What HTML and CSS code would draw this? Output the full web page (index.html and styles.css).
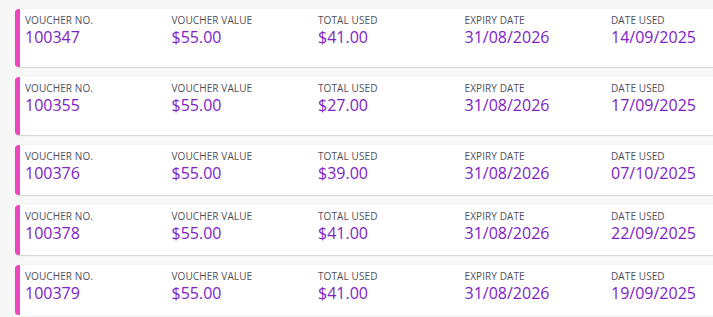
FILE: index.html
```html
<!DOCTYPE html>
<html>
<head>
<meta charset="utf-8">
<link rel="stylesheet" href="styles.css">
</head>
<body>
<div class="list">
  <div class="card tall">
    <div class="field"><div class="label">VOUCHER NO.</div><div class="value">100347</div></div>
    <div class="field"><div class="label">VOUCHER VALUE</div><div class="value">$55.00</div></div>
    <div class="field"><div class="label">TOTAL USED</div><div class="value">$41.00</div></div>
    <div class="field"><div class="label">EXPIRY DATE</div><div class="value">31/08/2026</div></div>
    <div class="field"><div class="label">DATE USED</div><div class="value">14/09/2025</div></div>
  </div>
  <div class="card tall">
    <div class="field"><div class="label">VOUCHER NO.</div><div class="value">100355</div></div>
    <div class="field"><div class="label">VOUCHER VALUE</div><div class="value">$55.00</div></div>
    <div class="field"><div class="label">TOTAL USED</div><div class="value">$27.00</div></div>
    <div class="field"><div class="label">EXPIRY DATE</div><div class="value">31/08/2026</div></div>
    <div class="field"><div class="label">DATE USED</div><div class="value">17/09/2025</div></div>
  </div>
  <div class="card">
    <div class="field"><div class="label">VOUCHER NO.</div><div class="value">100376</div></div>
    <div class="field"><div class="label">VOUCHER VALUE</div><div class="value">$55.00</div></div>
    <div class="field"><div class="label">TOTAL USED</div><div class="value">$39.00</div></div>
    <div class="field"><div class="label">EXPIRY DATE</div><div class="value">31/08/2026</div></div>
    <div class="field"><div class="label">DATE USED</div><div class="value">07/10/2025</div></div>
  </div>
  <div class="card">
    <div class="field"><div class="label">VOUCHER NO.</div><div class="value">100378</div></div>
    <div class="field"><div class="label">VOUCHER VALUE</div><div class="value">$55.00</div></div>
    <div class="field"><div class="label">TOTAL USED</div><div class="value">$41.00</div></div>
    <div class="field"><div class="label">EXPIRY DATE</div><div class="value">31/08/2026</div></div>
    <div class="field"><div class="label">DATE USED</div><div class="value">22/09/2025</div></div>
  </div>
  <div class="card">
    <div class="field"><div class="label">VOUCHER NO.</div><div class="value">100379</div></div>
    <div class="field"><div class="label">VOUCHER VALUE</div><div class="value">$55.00</div></div>
    <div class="field"><div class="label">TOTAL USED</div><div class="value">$41.00</div></div>
    <div class="field"><div class="label">EXPIRY DATE</div><div class="value">31/08/2026</div></div>
    <div class="field"><div class="label">DATE USED</div><div class="value">19/09/2025</div></div>
  </div>
</div>
</body>
</html>
```
FILE: styles.css
```css
html, body {
  margin: 0;
  padding: 0;
  background: #f7f7f7;
  overflow: hidden;
  font-family: "Open Sans", "Noto Sans", sans-serif;
}
.list {
  display: flex;
  flex-direction: column;
  gap: 10px;
  padding: 9px 0 0 15px;
}
.card {
  display: grid;
  grid-template-columns: repeat(4, 146.5px) 1fr;
  align-content: start;
  box-sizing: border-box;
  height: 50px;
  padding: 4px 0 0 5px;
  background: #fff;
  border-left: 5px solid #ee46bf;
  border-radius: 4px 0 0 4px;
  box-shadow: 0 1px 1px rgba(0,0,0,0.14);
}
.card.tall {
  height: 58px;
}
.field {
  display: flex;
  flex-direction: column;
  min-width: 0;
}
.label {
  font-size: 10px;
  line-height: 14px;
  letter-spacing: 0.1px;
  color: #4f4f5c;
  white-space: nowrap;
}
.value {
  font-size: 16px;
  line-height: 20px;
  font-weight: 500;
  color: #7e22c8;
  white-space: nowrap;
}
```
